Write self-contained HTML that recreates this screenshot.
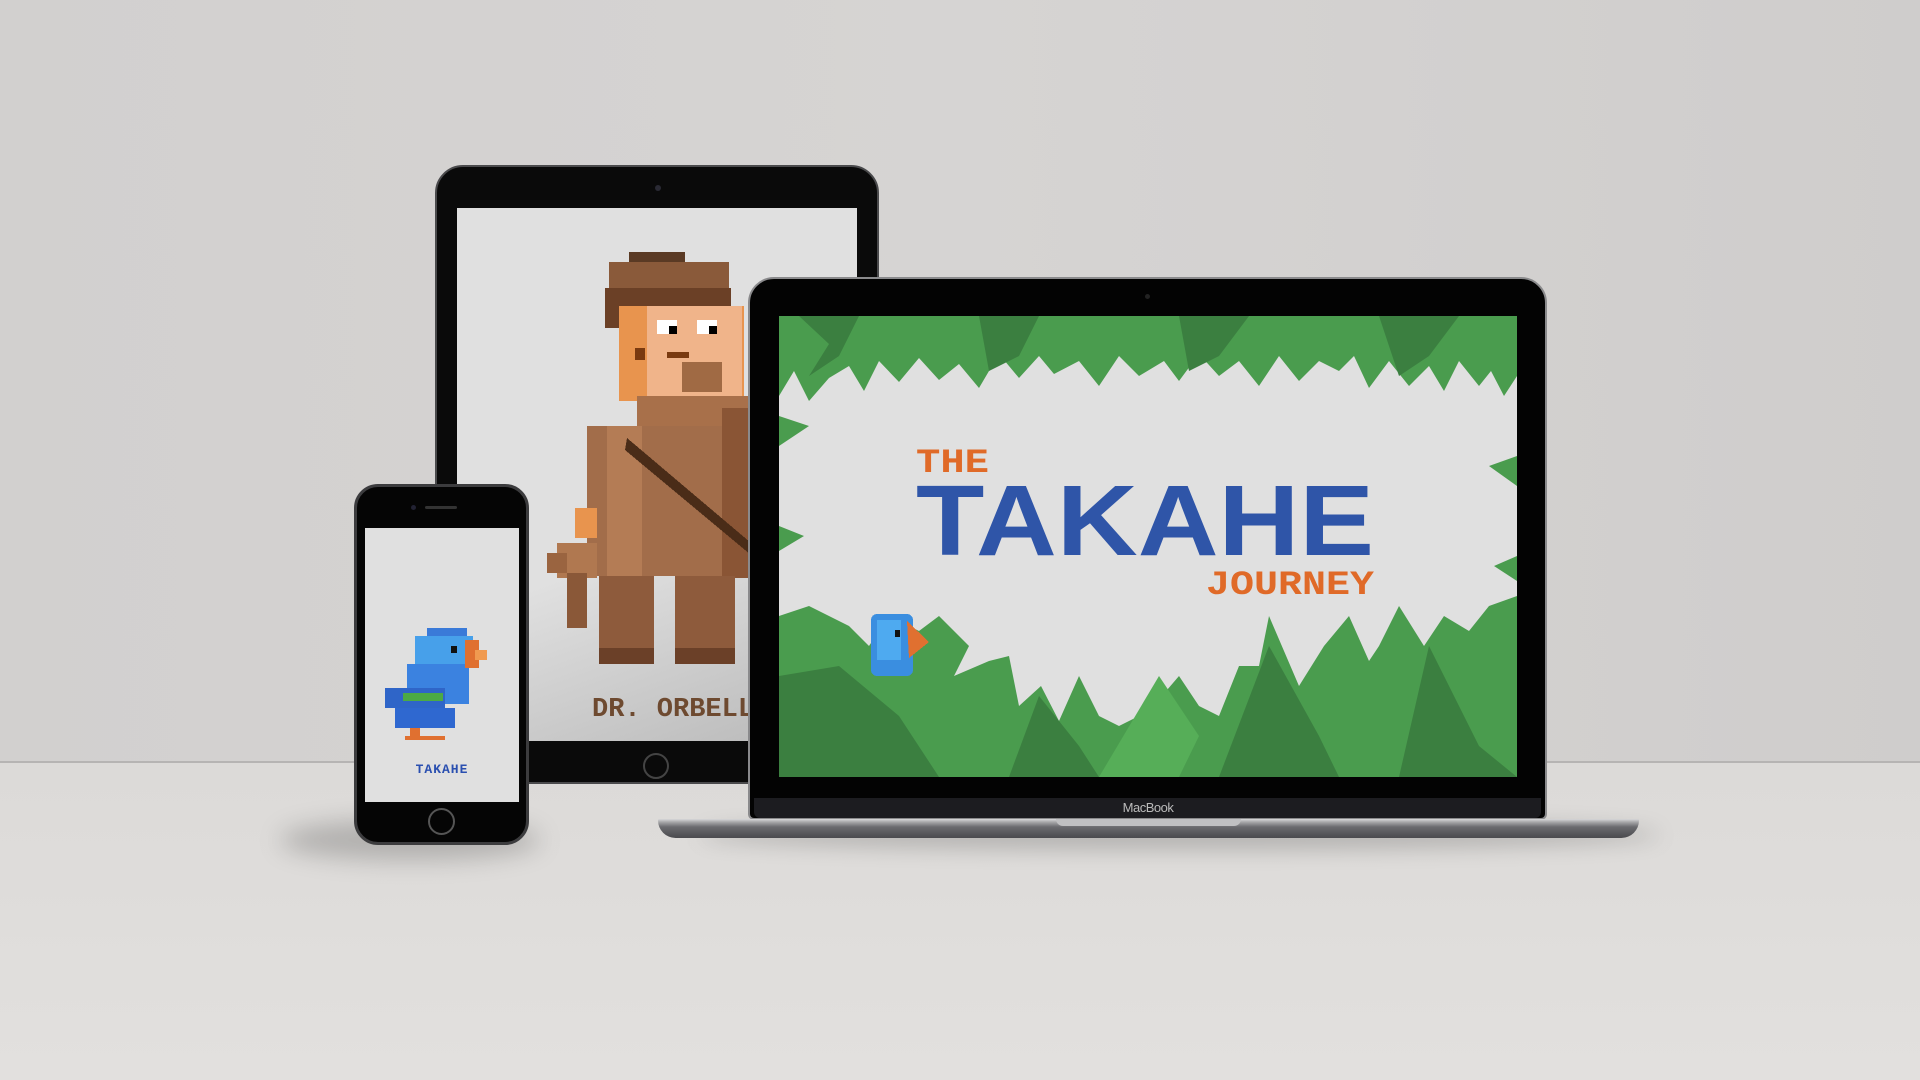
<!DOCTYPE html>
<html><head><meta charset="utf-8"><style>
*{margin:0;padding:0;box-sizing:border-box}
body{width:1920px;height:1080px;overflow:hidden;position:relative;background:#d0cecd;font-family:"Liberation Sans",sans-serif}
.a{position:absolute}
</style></head><body>
<div class="a" style="left:0;top:0;width:1920px;height:762px;background:linear-gradient(90deg,#d2d0cf,#d6d4d3 50%,#cfcdcc)"></div>
<div class="a" style="left:0;top:761px;width:1920px;height:2px;background:#b6b4b3"></div>
<div class="a" style="left:0;top:763px;width:1920px;height:317px;background:linear-gradient(#dcdad8,#e2e0de)"></div>
<div class="a" style="left:700px;top:820px;width:960px;height:30px;border-radius:50%;background:rgba(0,0,0,.18);filter:blur(10px)"></div>
<div class="a" style="left:280px;top:820px;width:260px;height:40px;border-radius:50%;background:rgba(0,0,0,.2);filter:blur(12px)"></div>

<!-- Tablet -->
<div class="a" style="left:435px;top:165px;width:444px;height:619px;border-radius:28px;background:#0a0a0a;border:2px solid #4a4a4c"></div>
<div class="a" style="left:655px;top:185px;width:6px;height:6px;border-radius:50%;background:#2a2a34"></div>
<div class="a" style="left:457px;top:208px;width:400px;height:533px;background:linear-gradient(160deg,#e0e0e0 60%,#b8b8b8)"></div>
<div class="a" style="left:643px;top:753px;width:26px;height:26px;border-radius:50%;border:2px solid #444"></div>
<svg class="a" style="left:457px;top:208px" width="400" height="533">
<g shape-rendering="crispEdges">
<rect x="172" y="44" width="56" height="10" fill="#5a3a24"/>
<rect x="152" y="54" width="120" height="26" fill="#8a5a3a"/>
<rect x="148" y="80" width="26" height="40" fill="#6b4026"/>
<rect x="174" y="80" width="100" height="18" fill="#6b4026"/>
<rect x="162" y="98" width="125" height="95" fill="#e8944e"/>
<rect x="190" y="98" width="95" height="90" fill="#f0b48a"/>
<rect x="178" y="140" width="10" height="12" fill="#7a3a10"/>
<rect x="200" y="112" width="20" height="14" fill="#fff"/><rect x="212" y="118" width="8" height="8" fill="#000"/>
<rect x="240" y="112" width="20" height="14" fill="#fff"/><rect x="252" y="118" width="8" height="8" fill="#000"/>
<rect x="210" y="144" width="22" height="6" fill="#7a3a10"/>
<rect x="225" y="154" width="40" height="30" fill="#a06a44"/>
<rect x="180" y="188" width="120" height="30" fill="#a8704a"/>
<rect x="130" y="218" width="160" height="150" fill="#a26d4a"/>
<rect x="150" y="218" width="35" height="150" fill="#b47c55"/>
<rect x="265" y="200" width="40" height="170" fill="#8a5535"/>
<rect x="142" y="368" width="55" height="88" fill="#8e5b3c"/>
<rect x="218" y="368" width="60" height="88" fill="#8e5b3c"/>
<rect x="142" y="440" width="55" height="16" fill="#6b4028"/>
<rect x="218" y="440" width="60" height="16" fill="#6b4028"/>
<rect x="100" y="335" width="40" height="35" fill="#b07850"/>
<rect x="90" y="345" width="20" height="20" fill="#9a6440"/>
<rect x="110" y="365" width="20" height="55" fill="#8a5838"/>
<rect x="118" y="300" width="22" height="30" fill="#e8944e"/>
<polygon points="170,230 300,340 300,352 168,242" fill="#4a2c18"/>
</g>
<text x="135" y="508" font-family="Liberation Mono" font-weight="bold" font-size="27" fill="#6e4a30">DR. ORBELL</text>
</svg>

<!-- Phone -->
<div class="a" style="left:354px;top:484px;width:175px;height:361px;border-radius:24px;background:#050505;border:3px solid #3c3c3e"></div>
<div class="a" style="left:411px;top:505px;width:5px;height:5px;border-radius:50%;background:#223"></div>
<div class="a" style="left:425px;top:506px;width:32px;height:3px;border-radius:2px;background:#333"></div>
<div class="a" style="left:365px;top:528px;width:154px;height:274px;background:#e0e0e0"></div>
<div class="a" style="left:428px;top:808px;width:27px;height:27px;border-radius:50%;border:2px solid #555"></div>
<svg class="a" style="left:365px;top:528px" width="154" height="274" shape-rendering="crispEdges">
<rect x="62" y="100" width="40" height="10" fill="#3a7ad8"/>
<rect x="50" y="108" width="58" height="30" fill="#47a0ea"/>
<rect x="42" y="136" width="62" height="40" fill="#3b82e0"/>
<rect x="20" y="160" width="60" height="20" fill="#2f65c8"/>
<rect x="30" y="180" width="60" height="20" fill="#2f68d0"/>
<rect x="38" y="165" width="40" height="8" fill="#4caa44"/>
<rect x="86" y="118" width="6" height="7" fill="#111"/>
<rect x="100" y="112" width="14" height="28" fill="#e07030"/>
<rect x="110" y="122" width="12" height="10" fill="#f09a50"/>
<rect x="45" y="200" width="10" height="10" fill="#e07030"/>
<rect x="40" y="208" width="40" height="4" fill="#e07030"/>
<text x="77" y="245" text-anchor="middle" font-family="Liberation Mono" font-weight="bold" font-size="13" fill="#2a4fb0" letter-spacing="1">TAKAHE</text>
</svg>

<!-- Laptop -->
<div class="a" style="left:748px;top:277px;width:799px;height:543px;border-radius:26px 26px 6px 6px;background:#030303;border:2px solid #8a8a8c"></div>
<div class="a" style="left:1145px;top:294px;width:5px;height:5px;border-radius:50%;background:#222"></div>
<div class="a" style="left:754px;top:798px;width:787px;height:20px;background:#1c1c20;border-radius:0 0 6px 6px"></div>
<div class="a" style="left:1100px;top:800px;width:96px;text-align:center;color:#bbb;font-size:13px;letter-spacing:-0.5px">MacBook</div>
<div class="a" style="left:658px;top:819px;width:981px;height:19px;border-radius:3px 3px 40px 40px;background:linear-gradient(#d8d8da 0,#a8a8aa 3px,#6a6a6e 8px,#4a4a4e)"></div>
<div class="a" style="left:1056px;top:819px;width:185px;height:7px;border-radius:0 0 8px 8px;background:#c0c0c2"></div>
<svg class="a" style="left:779px;top:316px" width="738" height="461">
<rect width="738" height="461" fill="#e0e0e0"/>
<g>
<polygon fill="#4a9c4e" points="0,0 738,0 738,60 725,80 712,55 700,70 680,45 665,75 650,50 630,70 610,45 590,72 575,40 560,55 540,45 520,65 500,40 480,70 460,45 440,60 420,38 400,65 385,45 360,60 340,40 320,70 300,45 275,58 260,40 240,62 220,38 200,72 180,48 160,64 140,42 120,66 100,45 85,75 70,50 50,62 30,85 15,55 0,80"/>
<polygon fill="#3b7f40" points="20,0 80,0 60,40 30,60 50,28"/>
<polygon fill="#3b7f40" points="200,0 260,0 240,40 210,55"/>
<polygon fill="#3b7f40" points="400,0 470,0 440,40 410,55"/>
<polygon fill="#3b7f40" points="600,0 680,0 650,40 620,60"/>
<polygon fill="#4a9c4e" points="0,100 30,110 0,130"/>
<polygon fill="#4a9c4e" points="0,210 25,220 0,235"/>
<polygon fill="#4a9c4e" points="738,140 710,150 738,170"/>
<polygon fill="#4a9c4e" points="738,240 715,250 738,265"/>
<polygon fill="#4a9c4e" points="0,461 0,300 30,290 70,310 90,330 110,300 140,315 160,300 190,330 175,360 210,345 230,340 240,390 262,370 280,405 300,360 320,400 340,410 370,395 400,360 420,390 440,400 460,350 480,350 490,300 520,370 545,330 570,300 590,345 600,330 620,290 645,330 665,300 690,315 710,290 738,280 738,461"/>
<polygon fill="#3b7f40" points="0,461 0,360 60,350 120,400 160,461"/>
<polygon fill="#3b7f40" points="230,461 260,380 300,430 320,461"/>
<polygon fill="#3b7f40" points="440,461 490,330 540,420 560,461"/>
<polygon fill="#3b7f40" points="620,461 650,330 700,430 738,461"/>
<polygon fill="#56ae58" points="320,461 380,360 420,420 400,461"/>
</g>
<g shape-rendering="crispEdges">
<rect x="92" y="298" width="42" height="62" rx="6" fill="#3a8ee0"/>
<rect x="98" y="304" width="24" height="40" fill="#4eaaf0"/>
<rect x="116" y="314" width="5" height="7" fill="#111"/>
<polygon points="128,305 150,326 130,342" fill="#e07030"/>
</g>
<text x="137" y="156" font-family="Liberation Mono" font-weight="bold" font-size="34" fill="#e06a28" textLength="73" lengthAdjust="spacingAndGlyphs">THE</text>
<text x="137" y="239" font-family="Liberation Sans" font-weight="bold" font-size="100" fill="#2f55a8" textLength="458" lengthAdjust="spacingAndGlyphs">TAKAHE</text>
<text x="427" y="278" font-family="Liberation Mono" font-weight="bold" font-size="34" fill="#e06a28" textLength="168" lengthAdjust="spacingAndGlyphs">JOURNEY</text>
</svg>
</body></html>
